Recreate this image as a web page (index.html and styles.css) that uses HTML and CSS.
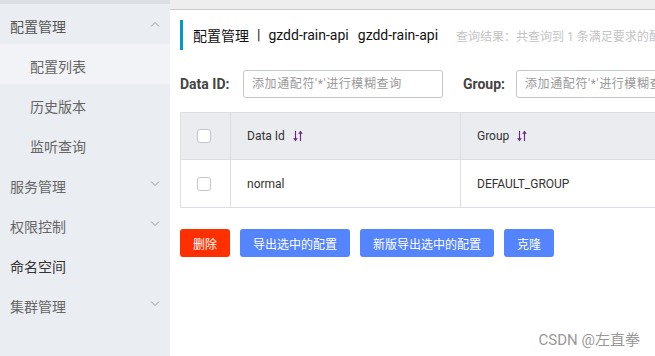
FILE: index.html
```html
<!DOCTYPE html>
<html lang="zh-CN">
<head>
  <meta charset="UTF-8" />
  <title>配置列表</title>
  <link rel="stylesheet" href="styles.css">
</head>
<body>
  <div class="layout">
    <aside class="sidebar">
      <div class="side-top"></div>
      <div class="menu-group open">
        <span>配置管理</span>
        <svg class="chev" width="10" height="6" viewBox="0 0 10 6"><path d="M1 5.5L5 1.5L9 5.5" fill="none" stroke="#999" stroke-width="1"/></svg>
      </div>
      <div class="menu-item active">配置列表</div>
      <div class="menu-item">历史版本</div>
      <div class="menu-item">监听查询</div>
      <div class="menu-group">
        <span>服务管理</span>
        <svg class="chev" width="10" height="6" viewBox="0 0 10 6"><path d="M1 0.5L5 4.5L9 0.5" fill="none" stroke="#999" stroke-width="1"/></svg>
      </div>
      <div class="menu-group">
        <span>权限控制</span>
        <svg class="chev" width="10" height="6" viewBox="0 0 10 6"><path d="M1 0.5L5 4.5L9 0.5" fill="none" stroke="#999" stroke-width="1"/></svg>
      </div>
      <div class="menu-group dark">
        <span>命名空间</span>
      </div>
      <div class="menu-group">
        <span>集群管理</span>
        <svg class="chev" width="10" height="6" viewBox="0 0 10 6"><path d="M1 0.5L5 4.5L9 0.5" fill="none" stroke="#999" stroke-width="1"/></svg>
      </div>
    </aside>

    <main class="main">
      <div class="main-top"></div>
      <div class="content">
        <div class="page-title">
          <span class="title-text">配置管理</span>
          <span class="title-sep">|</span>
          <span class="title-text">gzdd-rain-api</span>
          <span class="title-text title-ns">gzdd-rain-api</span>
          <span class="result-text">查询结果：共查询到 1 条满足要求的配置。</span>
        </div>

        <div class="search-row">
          <label class="search-label">Data ID:</label>
          <div class="search-input">添加通配符'*'进行模糊查询</div>
          <label class="search-label group-label">Group:</label>
          <div class="search-input">添加通配符'*'进行模糊查询</div>
        </div>

        <div class="table">
          <div class="tr thead">
            <div class="td col-check"><span class="checkbox"></span></div>
            <div class="td col-id">Data Id
              <svg class="sort" width="10" height="12" viewBox="0 0 10 12"><path d="M2.5 1V10M0.8 8L2.5 10.5L4.2 8M7.5 11V2M5.8 4L7.5 1.5L9.2 4" fill="none" stroke="#6a2a7a" stroke-width="1.1"/></svg>
            </div>
            <div class="td col-group">Group
              <svg class="sort" width="10" height="12" viewBox="0 0 10 12"><path d="M2.5 1V10M0.8 8L2.5 10.5L4.2 8M7.5 11V2M5.8 4L7.5 1.5L9.2 4" fill="none" stroke="#6a2a7a" stroke-width="1.1"/></svg>
            </div>
          </div>
          <div class="tr">
            <div class="td col-check"><span class="checkbox"></span></div>
            <div class="td col-id">normal</div>
            <div class="td col-group">DEFAULT_GROUP</div>
          </div>
        </div>

        <div class="actions">
          <button class="btn btn-danger">删除</button>
          <button class="btn">导出选中的配置</button>
          <button class="btn">新版导出选中的配置</button>
          <button class="btn">克隆</button>
        </div>
      </div>
      <div class="watermark">CSDN @左直拳</div>
    </main>
  </div>
</body>
</html>
```

FILE: styles.css
```css
body {
  margin: 0;
  font-family: Roboto, "Noto Sans CJK SC", sans-serif;
  color: #333;
  background: #fff;
  width: 655px;
  height: 356px;
  overflow: hidden;
}
.layout {
  display: flex;
  height: 356px;
}
.sidebar {
  width: 170px;
  flex-shrink: 0;
  background-color: #eaedf1;
}
.side-top {
  height: 4px;
  background-color: #dcdfe4;
}
.menu-group,
.menu-item {
  height: 40px;
  box-sizing: border-box;
  padding: 3px 8px 0 10px;
  display: flex;
  align-items: center;
  justify-content: space-between;
  font-size: 14px;
  color: #666;
}
.menu-group.dark { color: #333; }
.menu-group.open { color: #555; }
.menu-item {
  padding-left: 30px;
}
.menu-item.active {
  background-color: #f2f3f7;
}
.chev {
  margin-right: 2px;
  margin-top: -3px;
}
.main {
  flex: 1;
  position: relative;
  overflow: hidden;
  white-space: nowrap;
}
.main-top {
  height: 9px;
  background-color: #eeeeee;
  border-bottom: 1px solid #cccccc;
}
.content {
  padding: 10px 0 0 10px;
}
.page-title {
  height: 30px;
  border-left: 3px solid #0099cc;
  display: flex;
  align-items: center;
  padding-left: 10px;
}
.title-text {
  font-size: 14px;
  color: #111;
  flex-shrink: 0;
}
.title-sep {
  font-size: 14px;
  color: #111;
  margin: 0 8px 0 8px;
}
.title-ns {
  margin-left: 9px;
}
.result-text {
  font-size: 12px;
  color: #c4c4c4;
  margin-left: 18px;
  flex-shrink: 0;
}
.search-row {
  display: flex;
  align-items: center;
  margin-top: 20px;
  height: 28px;
}
.search-label {
  flex-shrink: 0;
  font-size: 14px;
  font-weight: bold;
  color: #444;
  width: 63px;
}
.group-label {
  width: 53px;
  margin-left: 20px;
}
.search-input {
  flex-shrink: 0;
  width: 200px;
  height: 28px;
  box-sizing: border-box;
  border: 1px solid #c4c6cf;
  border-radius: 3px;
  font-size: 12px;
  letter-spacing: 0.6px;
  color: #999;
  padding: 0 8px;
  line-height: 26px;
}
.table {
  margin-top: 14px;
  border-left: 1px solid #dcdee3;
  width: 600px;
}
.tr {
  display: flex;
  height: 48px;
  border-bottom: 1px solid #dcdee3;
  box-sizing: border-box;
}
.thead {
  background-color: #ebecf0;
  border-top: 1px solid #dcdee3;
}
.td {
  display: flex;
  align-items: center;
  font-size: 12px;
  color: #333;
  padding-left: 16px;
  border-right: 1px solid #dcdee3;
  box-sizing: border-box;
}
.col-check {
  width: 50px;
  padding-left: 16px;
}
.col-id { width: 230px; }
.col-group {
  width: 320px;
  border-right: none;
}
.sort {
  margin-left: 8px;
}
.checkbox {
  width: 14px;
  height: 14px;
  box-sizing: border-box;
  border: 1px solid #c4c6cf;
  border-radius: 3px;
  background: #fff;
}
.actions {
  display: flex;
  gap: 10px;
  margin-top: 21px;
}
.btn {
  height: 28px;
  padding: 0 13px;
  border: none;
  border-radius: 3px;
  background-color: #5584ff;
  color: #fff;
  font-family: Roboto, "Noto Sans CJK SC", sans-serif;
  font-size: 12px;
  cursor: pointer;
}
.btn-danger {
  background-color: #ff3000;
}
.watermark {
  position: absolute;
  right: 15px;
  top: 328px;
  font-size: 15px;
  color: #999;
}
```
